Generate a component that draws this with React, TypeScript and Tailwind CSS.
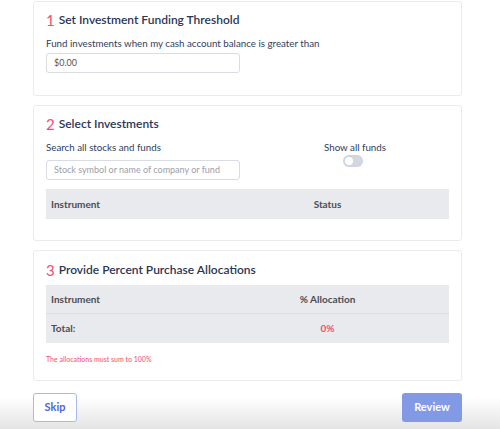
export default function App() {
  return (
    <div
      className="relative h-[429px] w-[500px] overflow-hidden bg-white"
      style={{ fontFamily: "Lato, 'Noto Sans', sans-serif" }}
    >
      <div className="absolute inset-x-0 bottom-0 h-[32px] bg-gradient-to-b from-white to-[#e4e4e4]" />

      <div className="relative flex w-[462px] flex-col gap-[9px] pl-[33px] pt-[1px]">
        {/* Step 1 */}
        <section className="h-[95px] rounded-[3px] border border-[#ebebeb] px-[12px] pt-[9px]">
          <h2 className="flex items-center gap-[4px] text-[12px] font-semibold leading-[18px] text-[#2b3656]">
            <span className="text-[15px] font-normal text-[#f0506e]">1</span>
            <span>Set Investment Funding Threshold</span>
          </h2>
          <p className="mt-[7px] text-[9.75px] leading-[14px] text-[#2f3d5c]">
            Fund investments when my cash account balance is greater than
          </p>
          <div className="mt-[3px] flex h-[20px] w-[194px] items-center rounded-[3px] border border-[#d9dce3] px-[7px] text-[9px] text-[#555]">
            $0.00
          </div>
        </section>

        {/* Step 2 */}
        <section className="h-[136px] rounded-[3px] border border-[#ebebeb] px-[12px] pt-[9px]">
          <h2 className="flex items-center gap-[4px] text-[12px] font-semibold leading-[18px] text-[#2b3656]">
            <span className="text-[15px] font-normal text-[#f0506e]">2</span>
            <span>Select Investments</span>
          </h2>
          <div className="mt-[7px] flex">
            <div className="w-[194px]">
              <p className="text-[9.75px] leading-[14px] text-[#2f3d5c]">Search all stocks and funds</p>
              <div className="mt-[6px] flex h-[20px] items-center rounded-[3px] border border-[#d9dce3] px-[7px] text-[9px] text-[#9a9ea8]">
                Stock symbol or name of company or fund
              </div>
            </div>
            <div className="ml-[84px] flex w-[62px] flex-col items-center whitespace-nowrap">
              <p className="text-[9.75px] leading-[14px] text-[#2f3d5c]">Show all funds</p>
              <div className="mt-[2px] mr-[4px] flex h-[10px] w-[18px] items-center rounded-full bg-[#d6d7db] px-[1px] ring-1 ring-[#c9d0f3]">
                <div className="h-[8px] w-[8px] rounded-full bg-white" />
              </div>
            </div>
          </div>
          <div className="mt-[9px] flex h-[30px] items-center bg-[#e9eaed] text-[10px] font-bold text-[#4a4d55]">
            <span className="w-[160px] pl-[5px]">Instrument</span>
            <span className="flex-1 text-center">Status</span>
          </div>
        </section>

        {/* Step 3 */}
        <section className="h-[131px] rounded-[3px] border border-[#ebebeb] px-[12px] pt-[10px]">
          <h2 className="flex items-center gap-[4px] text-[12px] font-semibold leading-[18px] text-[#2b3656]">
            <span className="text-[15px] font-normal text-[#f0506e]">3</span>
            <span>Provide Percent Purchase Allocations</span>
          </h2>
          <div className="mt-[6px] bg-[#e9eaed] text-[10px] font-bold text-[#4a4d55]">
            <div className="flex h-[29px] items-center border-b border-[#dcdde1]">
              <span className="w-[160px] pl-[5px]">Instrument</span>
              <span className="flex-1 text-center">% Allocation</span>
            </div>
            <div className="flex h-[29px] items-center">
              <span className="w-[160px] pl-[5px]">Total:</span>
              <span className="flex-1 text-center text-[#f0506e]">0%</span>
            </div>
          </div>
          <p className="mt-[11px] text-[7px] text-[#f0506e]">The allocations must sum to 100%</p>
        </section>

        <div className="mt-[3px] flex justify-between">
          <button className="h-[29px] w-[44px] rounded-[3px] border border-[#aab6ee] bg-white text-[11px] font-bold text-[#4c66d8]">
            Skip
          </button>
          <button className="h-[29px] w-[60px] rounded-[3px] bg-[#8299e6] text-[11px] font-bold text-white">
            Review
          </button>
        </div>
      </div>
    </div>
  );
}
